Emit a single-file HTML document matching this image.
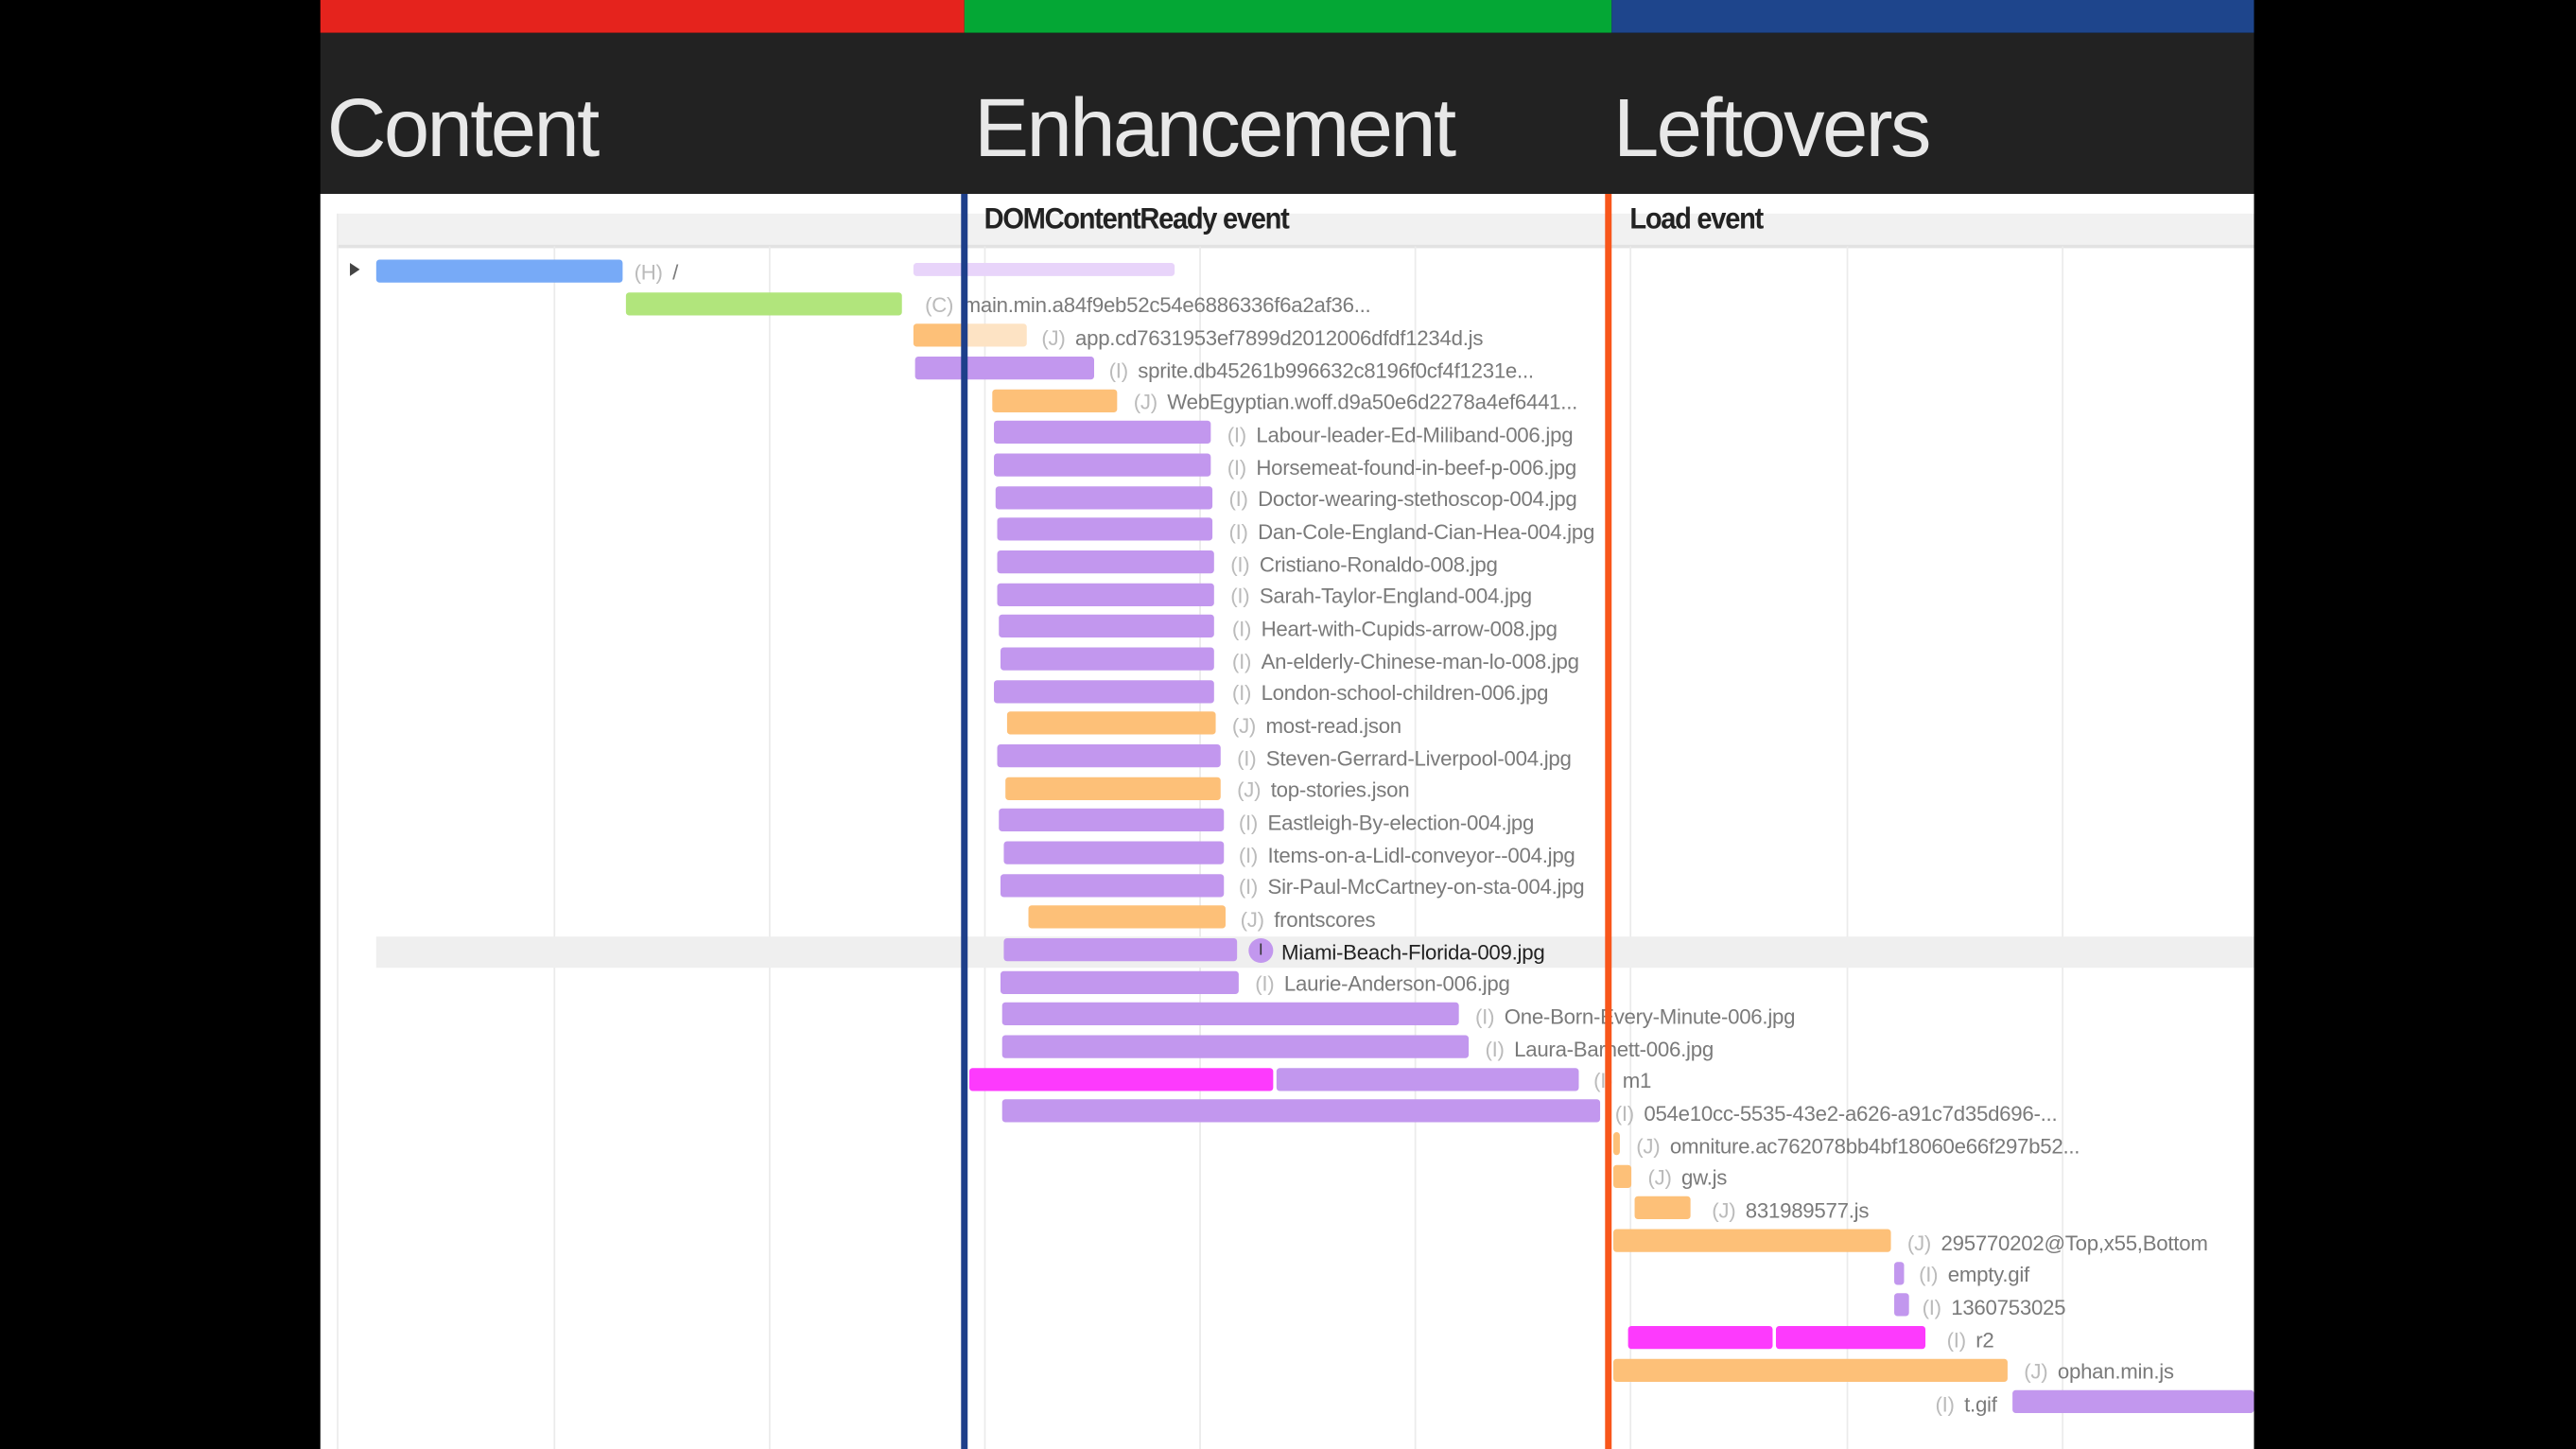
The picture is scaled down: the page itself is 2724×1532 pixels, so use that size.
<!DOCTYPE html>
<html><head><meta charset="utf-8"><style>
html,body{margin:0;padding:0;background:#000;width:2724px;height:1532px;overflow:hidden}
#s{position:absolute;left:0;top:0;width:1568px;height:882px;transform:scale(1.73724);transform-origin:0 0;font-family:"Liberation Sans",sans-serif}
.a{position:absolute}
.b{position:absolute;height:14px;border-radius:2px}
.p{background:#c297ee}.o{background:#fdc078}.m{background:#fd3afd}
.l{position:absolute;font-size:12.8px;color:#7a7a7a;white-space:nowrap;line-height:14px;letter-spacing:-0.15px}
.l i{font-style:normal;color:#bbb;margin-right:6px}
.g{position:absolute;top:150px;bottom:0;width:1px;background:#ebebeb}
.h{position:absolute;top:38px;font-size:50px;color:#e8e8e8;letter-spacing:-1.5px;line-height:80px}
.e{position:absolute;top:123px;font-size:18px;font-weight:bold;color:#222;letter-spacing:-0.8px;transform:scaleX(0.93);transform-origin:0 0}
</style></head><body><div id="s">
<div class="a" style="left:195px;top:0;width:392px;height:20px;background:#e5231d"></div>
<div class="a" style="left:587px;top:0;width:394px;height:20px;background:#04a735"></div>
<div class="a" style="left:981px;top:0;width:391px;height:20px;background:#1e458c"></div>
<div class="a" style="left:195px;top:20px;width:1177px;height:98px;background:#222"></div>
<div class="h" style="left:199px">Content</div>
<div class="h" style="left:593px">Enhancement</div>
<div class="h" style="left:982px">Leftovers</div>
<div class="a" style="left:195px;top:118px;width:1177px;height:764px;background:#fff"></div>
<div class="a" style="left:205px;top:130px;width:1167px;height:19px;background:#f1f1f1;border-bottom:2px solid #e2e2e2"></div>
<div class="g" style="left:205px;top:130px"></div><div class="g" style="left:337px"></div><div class="g" style="left:468px"></div><div class="g" style="left:599px"></div><div class="g" style="left:730px"></div><div class="g" style="left:861px"></div><div class="g" style="left:992px"></div><div class="g" style="left:1124px"></div><div class="g" style="left:1255px"></div>
<div class="e" style="left:599px">DOMContentReady event</div>
<div class="e" style="left:992px">Load event</div>
<div class="a" style="left:229px;top:570px;width:1143px;height:19px;background:#efefef"></div>
<div class="a" style="left:213px;top:160px;width:0;height:0;border-left:6px solid #444;border-top:4px solid transparent;border-bottom:4px solid transparent"></div>

<div class="b" style="left:229px;top:158px;width:150px;background:#77aaf7"></div><div class="l" style="left:386px;top:159px"><i>(H)</i>/</div>
<div class="b" style="left:556px;top:160px;width:159px;height:8px;background:#e8d4fa"></div>
<div class="b" style="left:381px;top:178px;width:168px;background:#b1e57c"></div><div class="l" style="left:563px;top:179px"><i>(C)</i>main.min.a84f9eb52c54e6886336f6a2af36...</div>
<div class="b" style="left:556px;top:197px;width:69px;background:linear-gradient(90deg,#fdc078 0 45%,#fde3c4 45%)"></div><div class="l" style="left:634px;top:199px"><i>(J)</i>app.cd7631953ef7899d2012006dfdf1234d.js</div>
<div class="b p" style="left:557px;top:217px;width:109px"></div><div class="l" style="left:675px;top:219px"><i>(I)</i>sprite.db45261b996632c8196f0cf4f1231e...</div>
<div class="b o" style="left:604px;top:237px;width:76px"></div><div class="l" style="left:690px;top:238px"><i>(J)</i>WebEgyptian.woff.d9a50e6d2278a4ef6441...</div>
<div class="b p" style="left:605px;top:256px;width:132px"></div><div class="l" style="left:747px;top:258px"><i>(I)</i>Labour-leader-Ed-Miliband-006.jpg</div>
<div class="b p" style="left:605px;top:276px;width:132px"></div><div class="l" style="left:747px;top:278px"><i>(I)</i>Horsemeat-found-in-beef-p-006.jpg</div>
<div class="b p" style="left:606px;top:296px;width:132px"></div><div class="l" style="left:748px;top:297px"><i>(I)</i>Doctor-wearing-stethoscop-004.jpg</div>
<div class="b p" style="left:607px;top:315px;width:131px"></div><div class="l" style="left:748px;top:317px"><i>(I)</i>Dan-Cole-England-Cian-Hea-004.jpg</div>
<div class="b p" style="left:607px;top:335px;width:132px"></div><div class="l" style="left:749px;top:337px"><i>(I)</i>Cristiano-Ronaldo-008.jpg</div>
<div class="b p" style="left:607px;top:355px;width:132px"></div><div class="l" style="left:749px;top:356px"><i>(I)</i>Sarah-Taylor-England-004.jpg</div>
<div class="b p" style="left:608px;top:374px;width:131px"></div><div class="l" style="left:750px;top:376px"><i>(I)</i>Heart-with-Cupids-arrow-008.jpg</div>
<div class="b p" style="left:609px;top:394px;width:130px"></div><div class="l" style="left:750px;top:396px"><i>(I)</i>An-elderly-Chinese-man-lo-008.jpg</div>
<div class="b p" style="left:605px;top:414px;width:134px"></div><div class="l" style="left:750px;top:415px"><i>(I)</i>London-school-children-006.jpg</div>
<div class="b o" style="left:613px;top:433px;width:127px"></div><div class="l" style="left:750px;top:435px"><i>(J)</i>most-read.json</div>
<div class="b p" style="left:607px;top:453px;width:136px"></div><div class="l" style="left:753px;top:455px"><i>(I)</i>Steven-Gerrard-Liverpool-004.jpg</div>
<div class="b o" style="left:612px;top:473px;width:131px"></div><div class="l" style="left:753px;top:474px"><i>(J)</i>top-stories.json</div>
<div class="b p" style="left:608px;top:492px;width:137px"></div><div class="l" style="left:754px;top:494px"><i>(I)</i>Eastleigh-By-election-004.jpg</div>
<div class="b p" style="left:611px;top:512px;width:134px"></div><div class="l" style="left:754px;top:514px"><i>(I)</i>Items-on-a-Lidl-conveyor--004.jpg</div>
<div class="b p" style="left:609px;top:532px;width:136px"></div><div class="l" style="left:754px;top:533px"><i>(I)</i>Sir-Paul-McCartney-on-sta-004.jpg</div>
<div class="b o" style="left:626px;top:551px;width:120px"></div><div class="l" style="left:755px;top:553px"><i>(J)</i>frontscores</div>
<div class="b p" style="left:611px;top:571px;width:142px"></div>
<div class="a" style="left:760px;top:571px;width:15px;height:15px;border-radius:50%;background:#c297ee;color:#333;font-size:10px;text-align:center;line-height:15px">I</div>
<div class="l" style="left:780px;top:573px;color:#222">Miami-Beach-Florida-009.jpg</div>
<div class="b p" style="left:609px;top:591px;width:145px"></div><div class="l" style="left:764px;top:592px"><i>(I)</i>Laurie-Anderson-006.jpg</div>
<div class="b p" style="left:610px;top:610px;width:278px"></div><div class="l" style="left:898px;top:612px"><i>(I)</i>One-Born-Every-Minute-006.jpg</div>
<div class="b p" style="left:610px;top:630px;width:284px"></div><div class="l" style="left:904px;top:632px"><i>(I)</i>Laura-Barnett-006.jpg</div>
<div class="b m" style="left:590px;top:650px;width:185px"></div><div class="b p" style="left:777px;top:650px;width:184px"></div><div class="l" style="left:970px;top:651px"><i>(I)</i>m1</div>
<div class="b p" style="left:610px;top:669px;width:364px"></div><div class="l" style="left:983px;top:671px"><i>(I)</i>054e10cc-5535-43e2-a626-a91c7d35d696-...</div>
<div class="b o" style="left:982px;top:689px;width:4px"></div><div class="l" style="left:996px;top:691px"><i>(J)</i>omniture.ac762078bb4bf18060e66f297b52...</div>
<div class="b o" style="left:982px;top:709px;width:11px"></div><div class="l" style="left:1003px;top:710px"><i>(J)</i>gw.js</div>
<div class="b o" style="left:995px;top:728px;width:34px"></div><div class="l" style="left:1042px;top:730px"><i>(J)</i>831989577.js</div>
<div class="b o" style="left:982px;top:748px;width:169px"></div><div class="l" style="left:1161px;top:750px"><i>(J)</i>295770202@Top,x55,Bottom</div>
<div class="b p" style="left:1153px;top:768px;width:6px"></div><div class="l" style="left:1168px;top:769px"><i>(I)</i>empty.gif</div>
<div class="b p" style="left:1153px;top:787px;width:9px"></div><div class="l" style="left:1170px;top:789px"><i>(I)</i>1360753025</div>
<div class="b m" style="left:991px;top:807px;width:88px"></div><div class="b m" style="left:1081px;top:807px;width:91px"></div><div class="l" style="left:1185px;top:809px"><i>(I)</i>r2</div>
<div class="b o" style="left:982px;top:827px;width:240px"></div><div class="l" style="left:1232px;top:828px"><i>(J)</i>ophan.min.js</div>
<div class="l" style="left:1178px;top:848px"><i>(I)</i>t.gif</div><div class="b p" style="left:1225px;top:846px;width:147px"></div>

<div class="a" style="left:585px;top:118px;width:4px;height:764px;background:#1e3f8a"></div>
<div class="a" style="left:977px;top:118px;width:4px;height:764px;background:#f8561b"></div>
</div></body></html>
